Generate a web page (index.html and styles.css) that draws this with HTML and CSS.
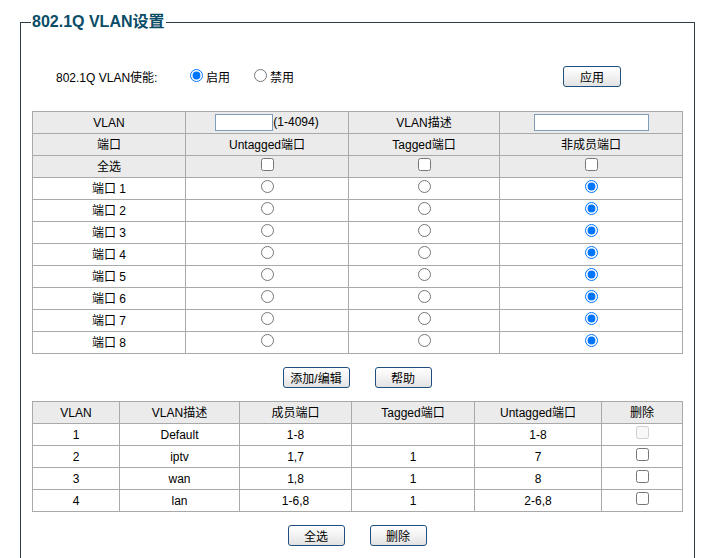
FILE: index.html
```html
<!DOCTYPE html>
<html lang="zh-CN">
<head>
<meta charset="utf-8">
<title>802.1Q VLAN设置</title>
<link rel="stylesheet" href="styles.css">
</head>
<body>
<div class="page">
  <fieldset class="box">
    <legend class="box-title">802.1Q VLAN设置</legend>

    <div class="enable-row">
      <span class="enable-label">802.1Q VLAN使能:</span>
      <label class="opt"><input type="radio" name="en" checked><span>启用</span></label>
      <label class="opt opt-2"><input type="radio" name="en"><span>禁用</span></label>
      <button class="btn btn-apply">应用</button>
    </div>

    <table class="grid grid-ports">
      <colgroup>
        <col class="c1"><col class="c2"><col class="c3"><col class="c4">
      </colgroup>
      <tr class="head">
        <td>VLAN</td>
        <td><input type="text" class="inp inp-vid">(1-4094)</td>
        <td>VLAN描述</td>
        <td><input type="text" class="inp inp-desc"></td>
      </tr>
      <tr class="head">
        <td>端口</td><td>Untagged端口</td><td>Tagged端口</td><td>非成员端口</td>
      </tr>
      <tr class="head">
        <td>全选</td>
        <td><input type="checkbox" class="cb"></td>
        <td><input type="checkbox" class="cb"></td>
        <td><input type="checkbox" class="cb"></td>
      </tr>
      <tr><td>端口 1</td><td><input type="radio" class="rd" name="p1"></td><td><input type="radio" class="rd" name="p1"></td><td><input type="radio" class="rd" name="p1" checked></td></tr>
      <tr><td>端口 2</td><td><input type="radio" class="rd" name="p2"></td><td><input type="radio" class="rd" name="p2"></td><td><input type="radio" class="rd" name="p2" checked></td></tr>
      <tr><td>端口 3</td><td><input type="radio" class="rd" name="p3"></td><td><input type="radio" class="rd" name="p3"></td><td><input type="radio" class="rd" name="p3" checked></td></tr>
      <tr><td>端口 4</td><td><input type="radio" class="rd" name="p4"></td><td><input type="radio" class="rd" name="p4"></td><td><input type="radio" class="rd" name="p4" checked></td></tr>
      <tr><td>端口 5</td><td><input type="radio" class="rd" name="p5"></td><td><input type="radio" class="rd" name="p5"></td><td><input type="radio" class="rd" name="p5" checked></td></tr>
      <tr><td>端口 6</td><td><input type="radio" class="rd" name="p6"></td><td><input type="radio" class="rd" name="p6"></td><td><input type="radio" class="rd" name="p6" checked></td></tr>
      <tr><td>端口 7</td><td><input type="radio" class="rd" name="p7"></td><td><input type="radio" class="rd" name="p7"></td><td><input type="radio" class="rd" name="p7" checked></td></tr>
      <tr><td>端口 8</td><td><input type="radio" class="rd" name="p8"></td><td><input type="radio" class="rd" name="p8"></td><td><input type="radio" class="rd" name="p8" checked></td></tr>
    </table>

    <div class="btn-row">
      <button class="btn btn-edit">添加/编辑</button>
      <button class="btn btn-help">帮助</button>
    </div>

    <table class="grid grid-list">
      <colgroup>
        <col class="d1"><col class="d2"><col class="d3"><col class="d4"><col class="d5"><col class="d6">
      </colgroup>
      <tr class="head">
        <td>VLAN</td><td>VLAN描述</td><td>成员端口</td><td>Tagged端口</td><td>Untagged端口</td><td>删除</td>
      </tr>
      <tr><td>1</td><td>Default</td><td>1-8</td><td></td><td>1-8</td><td><input type="checkbox" class="cb" disabled></td></tr>
      <tr><td>2</td><td>iptv</td><td>1,7</td><td>1</td><td>7</td><td><input type="checkbox" class="cb"></td></tr>
      <tr><td>3</td><td>wan</td><td>1,8</td><td>1</td><td>8</td><td><input type="checkbox" class="cb"></td></tr>
      <tr><td>4</td><td>lan</td><td>1-6,8</td><td>1</td><td>2-6,8</td><td><input type="checkbox" class="cb"></td></tr>
    </table>

    <div class="btn-row">
      <button class="btn btn-all">全选</button>
      <button class="btn btn-del">删除</button>
    </div>
  </fieldset>
</div>
</body>
</html>
```

FILE: styles.css
```css
html, body {
  margin: 0;
  padding: 0;
  background: #fff;
}

body {
  font-family: "Liberation Sans", Arial, "Noto Sans CJK SC", sans-serif;
  font-size: 12px;
  color: #000;
}

.page {
  padding: 12px 0 0 20px;
  width: 675px;
}

.box {
  margin: 0;
  padding: 0 12px 40px 11px;
  border: 1px solid #2f3e46;
  min-width: 0;
}

.box-title {
  margin-left: -1px;
  padding: 0 1px;
  font-size: 16px;
  line-height: 20px;
  font-weight: bold;
  color: #0b4d66;
}

.enable-row {
  display: flex;
  align-items: center;
  height: 22px;
  margin: 33px 0 24px 0;
}

.enable-label {
  width: 158px;
  padding-left: 24px;
  box-sizing: border-box;
}

.opt {
  display: flex;
  align-items: center;
  gap: 3px;
}

.opt input {
  margin: 0 0 2px 0;
  width: 13px;
  height: 13px;
}

.opt-2 {
  margin-left: 24px;
}

.btn {
  font-family: "Liberation Sans", Arial, "Noto Sans CJK SC", sans-serif;
  font-size: 12px;
  color: #000;
  height: 21px;
  padding: 0;
  border: 1px solid #1f4f7e;
  border-radius: 3px;
  background: linear-gradient(#ffffff, #f2f2f2 50%, #e2e2e2);
  cursor: pointer;
}

.btn-apply {
  width: 58px;
  margin-left: 269px;
}

.btn-edit { width: 67px; }
.btn-help { width: 57px; }
.btn-all { width: 57px; }
.btn-del { width: 57px; }

.btn-row {
  display: flex;
  justify-content: center;
  gap: 25px;
  margin: 13px 0;
}

.grid {
  width: 650px;
  border-collapse: collapse;
  table-layout: fixed;
}

.grid td {
  border: 1px solid #a9a9a9;
  height: 21px;
  padding: 0;
  text-align: center;
  vertical-align: middle;
  line-height: 14px;
}

.grid .head td {
  background: #ebebeb;
}

.c1 { width: 153px; }
.c2 { width: 163px; }
.c3 { width: 151px; }
.c4 { width: 183px; }

.d1 { width: 87px; }
.d2 { width: 120px; }
.d3 { width: 112px; }
.d4 { width: 123px; }
.d5 { width: 127px; }
.d6 { width: 81px; }

.inp {
  box-sizing: border-box;
  height: 17px;
  margin: 0;
  padding: 0 2px;
  border: 1px solid #7f9db9;
  vertical-align: middle;
  font-size: 12px;
}

.inp-vid { width: 58px; }
.inp-desc { width: 115px; }

.cb, .rd {
  width: 13px;
  height: 13px;
  margin: 0 0 4px 0;
  vertical-align: middle;
}
```
